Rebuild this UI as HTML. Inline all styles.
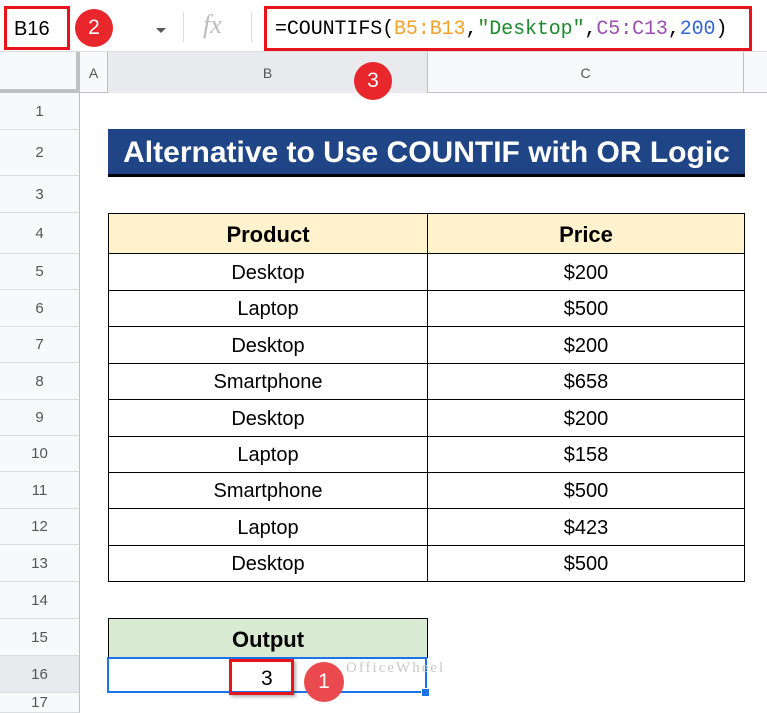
<!DOCTYPE html>
<html><head><style>
*{margin:0;padding:0;box-sizing:border-box}
body{width:767px;height:707px;overflow:hidden;background:#fff;font-family:"Liberation Sans",Arial,sans-serif;position:relative}
.a{position:absolute}
.rh{position:absolute;left:0;width:80px;background:#f8f9fa;border-bottom:1px solid #dadce0;border-right:1px solid #c0c0c0;color:#555;font-size:15px;display:flex;align-items:center;justify-content:center}
.cell{position:absolute;display:flex;align-items:center;justify-content:center;font-size:20px;color:#000;padding-top:3px}
.badge{position:absolute;width:38px;height:38px;border-radius:50%;background:#e8262b;color:#fff;font-size:21px;display:flex;align-items:center;justify-content:center}
</style></head><body>
<div class="a" style="left:0;top:0;width:767px;height:52px;background:#fff;border-bottom:1px solid #dadce0"></div>
<div class="a" style="left:4px;top:6px;width:66px;height:44px;border:3px solid #e8141c"></div>
<div class="a" style="left:14px;top:18px;font-size:20px;color:#000">B16</div>
<div class="badge" style="left:75px;top:9px">2</div>
<div class="a" style="left:156px;top:28px;width:0;height:0;border-left:5px solid transparent;border-right:5px solid transparent;border-top:5px solid #555"></div>
<div class="a" style="left:183px;top:12px;width:1px;height:30px;background:#dadce0"></div>
<div class="a" style="left:203px;top:10px;font-family:'Liberation Serif',serif;font-style:italic;font-size:26px;color:#bbb">fx</div>
<div class="a" style="left:251px;top:12px;width:1px;height:30px;background:#dadce0"></div>
<div class="a" style="left:264px;top:6px;width:488px;height:45px;border:3px solid #e8141c"></div>
<div class="a" style="left:275px;top:18px;font-family:'Liberation Mono',monospace;font-size:20px;color:#000;letter-spacing:-0.1px">=COUNTIFS(<span style="color:#f4a12a">B5:B13</span>,<span style="color:#1e8a2e">"Desktop"</span>,<span style="color:#9b4fb0">C5:C13</span>,<span style="color:#3367d6">200</span>)</div>
<div class="a" style="left:0;top:52px;width:767px;height:41px;background:#f8f9fa;border-bottom:1px solid #c0c0c0"></div>
<div class="a" style="left:0;top:52px;width:80px;height:41px;border-right:4px solid #c0c0c0;border-bottom:4px solid #c0c0c0"></div>
<div class="a" style="left:80px;top:52px;width:28px;height:41px;border-right:1px solid #c0c0c0;display:flex;align-items:center;justify-content:center;font-size:14px;color:#555">A</div>
<div class="a" style="left:108px;top:52px;width:320px;height:41px;background:#e8eaed;border-right:1px solid #c0c0c0;display:flex;align-items:center;justify-content:center;font-size:14px;color:#555">B</div>
<div class="a" style="left:428px;top:52px;width:316px;height:41px;border-right:1px solid #c0c0c0;display:flex;align-items:center;justify-content:center;font-size:14px;color:#555">C</div>
<div class="badge" style="left:354px;top:62px">3</div>
<div class="rh" style="top:93px;height:37px">1</div>
<div class="rh" style="top:130px;height:46px">2</div>
<div class="rh" style="top:176px;height:37px">3</div>
<div class="rh" style="top:213px;height:41px">4</div>
<div class="rh" style="top:254px;height:36px">5</div>
<div class="rh" style="top:290px;height:37px">6</div>
<div class="rh" style="top:327px;height:36px">7</div>
<div class="rh" style="top:363px;height:37px">8</div>
<div class="rh" style="top:400px;height:36px">9</div>
<div class="rh" style="top:436px;height:36px">10</div>
<div class="rh" style="top:472px;height:37px">11</div>
<div class="rh" style="top:509px;height:36px">12</div>
<div class="rh" style="top:545px;height:37px">13</div>
<div class="rh" style="top:582px;height:37px">14</div>
<div class="rh" style="top:619px;height:37px">15</div>
<div class="rh" style="top:656px;height:37px;background:#e8eaed">16</div>
<div class="rh" style="top:693px;height:20px">17</div>
<div class="a" style="left:108px;top:129px;width:637px;height:48px;background:#1f4586;border-bottom:3px solid #000;color:#fff;font-weight:bold;font-size:30px;display:flex;align-items:center;justify-content:center;padding-top:2px">Alternative to Use COUNTIF with OR Logic</div>
<div class="cell" style="left:108px;top:213px;width:320px;height:41px;background:#fff2cc;border:1.5px solid #000;font-weight:bold;font-size:22px">Product</div>
<div class="cell" style="left:427px;top:213px;width:318px;height:41px;background:#fff2cc;border:1.5px solid #000;font-weight:bold;font-size:22px">Price</div>
<div class="cell" style="left:108px;top:254px;width:320px;height:37px;border:1.5px solid #000;border-top:none">Desktop</div><div class="cell" style="left:427px;top:254px;width:318px;height:37px;border:1.5px solid #000;border-top:none">$200</div>
<div class="cell" style="left:108px;top:290px;width:320px;height:37px;border:1.5px solid #000;border-top:none">Laptop</div><div class="cell" style="left:427px;top:290px;width:318px;height:37px;border:1.5px solid #000;border-top:none">$500</div>
<div class="cell" style="left:108px;top:327px;width:320px;height:37px;border:1.5px solid #000;border-top:none">Desktop</div><div class="cell" style="left:427px;top:327px;width:318px;height:37px;border:1.5px solid #000;border-top:none">$200</div>
<div class="cell" style="left:108px;top:363px;width:320px;height:37px;border:1.5px solid #000;border-top:none">Smartphone</div><div class="cell" style="left:427px;top:363px;width:318px;height:37px;border:1.5px solid #000;border-top:none">$658</div>
<div class="cell" style="left:108px;top:400px;width:320px;height:37px;border:1.5px solid #000;border-top:none">Desktop</div><div class="cell" style="left:427px;top:400px;width:318px;height:37px;border:1.5px solid #000;border-top:none">$200</div>
<div class="cell" style="left:108px;top:436px;width:320px;height:37px;border:1.5px solid #000;border-top:none">Laptop</div><div class="cell" style="left:427px;top:436px;width:318px;height:37px;border:1.5px solid #000;border-top:none">$158</div>
<div class="cell" style="left:108px;top:472px;width:320px;height:37px;border:1.5px solid #000;border-top:none">Smartphone</div><div class="cell" style="left:427px;top:472px;width:318px;height:37px;border:1.5px solid #000;border-top:none">$500</div>
<div class="cell" style="left:108px;top:509px;width:320px;height:37px;border:1.5px solid #000;border-top:none">Laptop</div><div class="cell" style="left:427px;top:509px;width:318px;height:37px;border:1.5px solid #000;border-top:none">$423</div>
<div class="cell" style="left:108px;top:545px;width:320px;height:37px;border:1.5px solid #000;border-top:none">Desktop</div><div class="cell" style="left:427px;top:545px;width:318px;height:37px;border:1.5px solid #000;border-top:none">$500</div>
<div class="cell" style="left:108px;top:618px;width:320px;height:40px;background:#d9ead3;border:1.5px solid #000;font-weight:bold;font-size:22px">Output</div>
<div class="a" style="left:107px;top:657px;width:320px;height:36px;border:2px solid #1a73e8"></div>
<div class="a" style="left:421px;top:688px;width:9px;height:9px;background:#1a73e8;border:1px solid #fff"></div>
<div class="a" style="left:229px;top:659px;width:65px;height:36px;border:3px solid #e8141c;box-shadow:2px 2px 3px rgba(0,0,0,.3)"></div>
<div class="a" style="left:261px;top:667px;font-size:21px">3</div>
<div class="badge" style="left:304px;top:662px;width:40px;height:40px;background:#ea4a4e">1</div>
<div class="a" style="left:346px;top:660px;font-family:'Liberation Serif',serif;font-size:15px;color:#c8c8c8;letter-spacing:2px">OfficeWheel</div>
</body></html>
